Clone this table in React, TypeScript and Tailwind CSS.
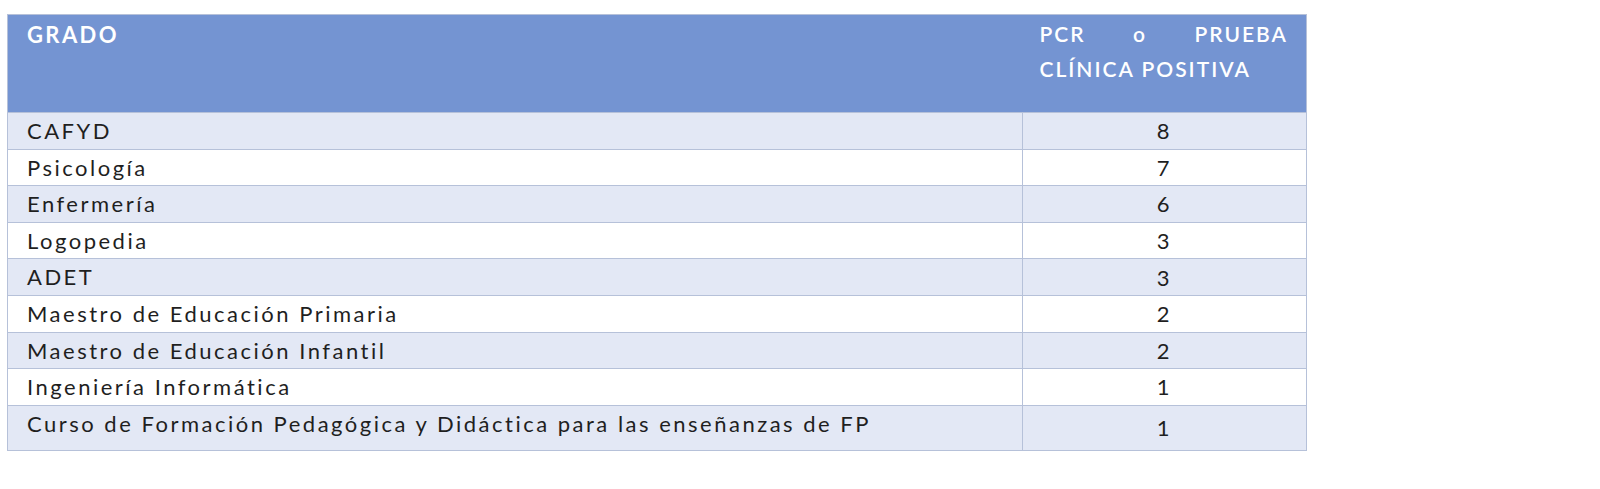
const rows: [string, number][] = [
  ["CAFYD", 8],
  ["Psicología", 7],
  ["Enfermería", 6],
  ["Logopedia", 3],
  ["ADET", 3],
  ["Maestro de Educación Primaria", 2],
  ["Maestro de Educación Infantil", 2],
  ["Ingeniería Informática", 1],
  ["Curso de Formación Pedagógica y Didáctica para las enseñanzas de FP", 1],
];

export default function App() {
  return (
    <div className="min-h-screen bg-white pt-[14px] pl-[7px] font-['Lato','Open_Sans',sans-serif]">
      <table className="w-[1300px] border-collapse border border-[#b6c1d9] text-[22px] tracking-[2.5px] text-[#1f1f1f]">
        <thead>
          <tr className="h-[98px] bg-[#7494d2] text-white">
            <th className="w-[1015px] px-[19px] pt-[3px] text-left align-top text-[22px] font-bold leading-[34px] tracking-[2.4px]">
              GRADO
            </th>
            <th className="pl-[17px] pr-[18px] pt-[1px] text-left align-top text-[21px] font-semibold leading-[35px] tracking-[2px]">
              <div className="flex justify-between">
                <span>PCR</span>
                <span>o</span>
                <span>PRUEBA</span>
              </div>
              <div>CLÍNICA POSITIVA</div>
            </th>
          </tr>
        </thead>
        <tbody>
          {rows.map(([name, n], i) => (
            <tr
              key={name}
              className={`${i === rows.length - 1 ? "h-[45px]" : "h-[36.6px]"} ${
                i % 2 === 0 ? "bg-[#e3e8f5]" : "bg-white"
              }`}
            >
              <td className="border border-[#b6c1d9] px-[19px] pt-[1px] align-top leading-[33px]">
                {name}
              </td>
              <td className="border border-[#b6c1d9] text-center align-middle">{n}</td>
            </tr>
          ))}
        </tbody>
      </table>
    </div>
  );
}
